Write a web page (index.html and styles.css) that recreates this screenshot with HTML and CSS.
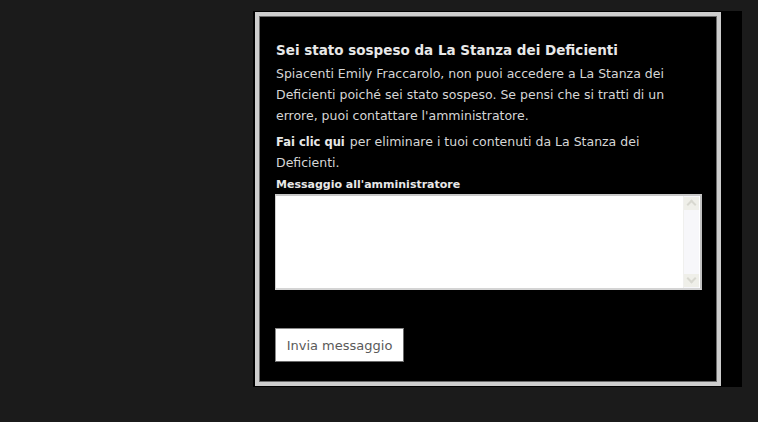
FILE: index.html
```html
<!DOCTYPE html>
<html lang="it">
<head>
<meta charset="utf-8">
<title>Sospeso</title>
<link rel="stylesheet" href="styles.css">
</head>
<body>
<div class="page">
  <div class="wrap">
    <div class="box">
      <h1 class="title">Sei stato sospeso da La Stanza dei Deficienti</h1>
      <p class="text">Spiacenti Emily Fraccarolo, non puoi accedere a La Stanza dei Deficienti poiché sei stato sospeso. Se pensi che si tratti di un errore, puoi contattare l'amministratore.</p>
      <p class="text text-second"><b class="strong">Fai clic qui</b> per eliminare i tuoi contenuti da La Stanza dei Deficienti.</p>
      <label class="label" for="msg">Messaggio all'amministratore</label>
      <div class="area">
        <textarea id="msg" class="textarea"></textarea>
        <div class="scroll">
          <span class="arrow arrow-up"></span>
          <span class="arrow arrow-down"></span>
        </div>
      </div>
      <button class="button" type="button">Invia messaggio</button>
    </div>
  </div>
</div>
</body>
</html>
```

FILE: styles.css
```css
html, body {
  margin: 0;
  padding: 0;
  background: #1b1b1b;
  height: 100%;
}

.page {
  padding: 11px 16px 0 253px;
}

.wrap {
  width: 489px;
  box-sizing: border-box;
  background: #000;
  padding: 1px 21px 1px 2px;
}

.box {
  box-sizing: border-box;
  width: 466px;
  height: 374px;
  border: 4px solid #cdcdcd;
  box-shadow: inset 0 0 0 1px #6a6a6a;
  background: #000;
  padding: 24px 15px 0 16px;
  font-family: "DejaVu Sans", Verdana, sans-serif;
  color: #d6d6d6;
}

.title {
  margin: 0 0 3px 1px;
  font-size: 13.5px;
  font-weight: bold;
  line-height: 20px;
  color: #e8e8e8;
}

.text {
  margin: 0 0 5px 1px;
  font-size: 12.5px;
  line-height: 21px;
}

.text-second {
  margin-bottom: 0;
}

.strong {
  display: inline-block;
  color: #e8e8e8;
  font-size: 11.5px;
  line-height: 14px;
  margin-right: 1px;
}

.label {
  display: block;
  margin: 6px 0 0 1px;
  font-size: 11px;
  font-weight: bold;
  line-height: 12px;
  color: #e8e8e8;
}

.area {
  position: relative;
  margin-top: 3px;
  width: 427px;
  height: 96px;
  box-sizing: border-box;
  border-top: 2px solid #c8c8c8;
  border-left: 1px solid #d0d0d0;
  border-right: 2px solid #c0c0c0;
  border-bottom: 2px solid #d4d4d4;
  background: #fff;
}

.textarea {
  display: block;
  width: 100%;
  height: 100%;
  box-sizing: border-box;
  border: 0;
  padding: 0;
  margin: 0;
  resize: none;
  outline: none;
  background: transparent;
}

.scroll {
  position: absolute;
  top: 0;
  right: 1px;
  bottom: 0;
  width: 15px;
  background: #f7f7fa;
  border-left: 1px solid #f0f0ee;
}

.arrow {
  position: absolute;
  left: 0;
  width: 15px;
  height: 13px;
  background: #efefe9;
}

.arrow-up { top: 1px; }
.arrow-down { bottom: 1px; }

.arrow::after {
  content: "";
  position: absolute;
  left: 4px;
  width: 5px;
  height: 5px;
  border-left: 2px solid #d8d8d0;
  border-top: 2px solid #d8d8d0;
}

.arrow-up::after {
  top: 4px;
  transform: rotate(45deg);
}

.arrow-down::after {
  top: 1px;
  transform: rotate(225deg);
}

.button {
  display: block;
  margin-top: 38px;
  width: 129px;
  height: 34px;
  box-sizing: border-box;
  background: #fff;
  border: 1px solid #8a8a8a;
  border-right-color: #6a6a6a;
  border-bottom-color: #6a6a6a;
  padding: 0;
  font-family: "DejaVu Sans", Verdana, sans-serif;
  font-size: 13px;
  color: #5a5a5a;
}
```
